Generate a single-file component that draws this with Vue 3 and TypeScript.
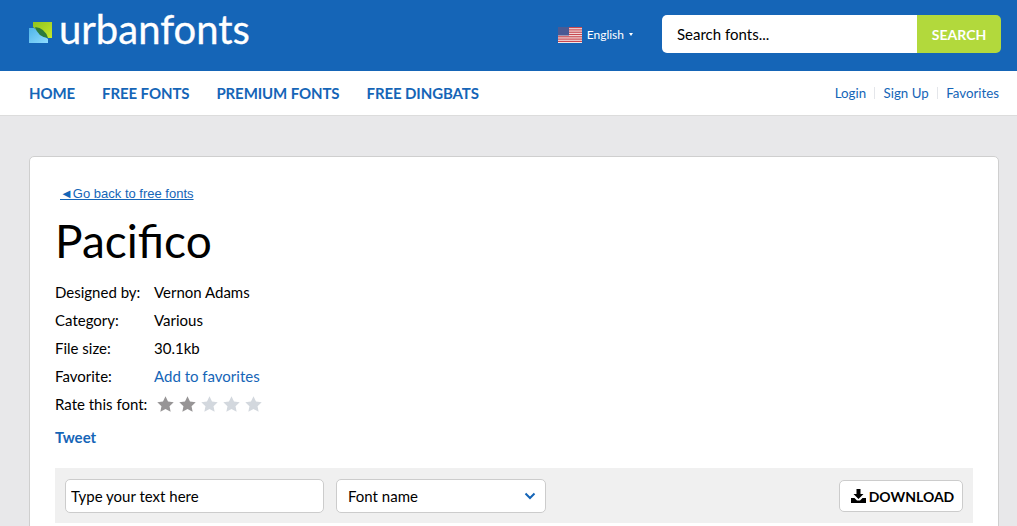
<script setup lang="ts">
const details: { label: string; value: string; link?: boolean }[] = [
  { label: 'Designed by:', value: 'Vernon Adams' },
  { label: 'Category:', value: 'Various' },
  { label: 'File size:', value: '30.1kb' },
  { label: 'Favorite:', value: 'Add to favorites', link: true },
]
const navItems = ['HOME', 'FREE FONTS', 'PREMIUM FONTS', 'FREE DINGBATS']
const userLinks = ['Login', 'Sign Up', 'Favorites']
const stars = [true, true, false, false, false]
const stripes = [0, 1, 2, 3, 4, 5, 6]
</script>

<template>
  <div class="page">
    <header class="top">
      <a class="logo">
        <svg class="logo-mark" width="23" height="21" viewBox="0 0 23 21">
          <defs>
            <linearGradient id="lg" x1="0" y1="0" x2="1" y2="1">
              <stop offset="0" stop-color="#8fc31f" />
              <stop offset="1" stop-color="#c5e82a" />
            </linearGradient>
            <linearGradient id="lb" x1="0" y1="0" x2="1" y2="1">
              <stop offset="0" stop-color="#4fb4e8" />
              <stop offset="1" stop-color="#8fdcff" />
            </linearGradient>
          </defs>
          <path d="M0 6 H5 L19 17 V21 H0 Z" fill="url(#lb)" />
          <path d="M4 0 H23 V16 H19 L4 5 Z" fill="url(#lg)" />
          <path d="M6 5 Q16 6 19 16 Q9 15 6 5 Z" fill="#2c7a3a" />
        </svg>
        <span class="logo-text">urbanfonts</span>
      </a>
      <div class="top-right">
        <div class="lang">
          <svg class="flag" width="24" height="16" viewBox="0 0 24 16">
            <rect width="24" height="16" fill="#f4e6e6" />
            <rect v-for="i in stripes" :key="i" x="0" :y="i * 2.3" width="24" height="1.2" fill="#c8474f" />
            <rect width="11" height="8.5" fill="#4a5a94" />
          </svg>
          <span>English</span>
          <i class="caret"></i>
        </div>
        <form class="search" @submit.prevent>
          <input class="search-input" type="text" placeholder="Search fonts..." />
          <button class="search-btn" type="submit">SEARCH</button>
        </form>
      </div>
    </header>

    <nav class="nav">
      <div class="nav-main">
        <a v-for="item in navItems" :key="item">{{ item }}</a>
      </div>
      <div class="nav-user">
        <template v-for="(l, i) in userLinks" :key="l">
          <span v-if="i > 0" class="sep"></span>
          <a>{{ l }}</a>
        </template>
      </div>
    </nav>

    <main class="main">
      <section class="card">
        <a class="back">◄Go back to free fonts</a>
        <h1 class="title">Pacifico</h1>
        <dl class="details">
          <div v-for="d in details" :key="d.label" class="row">
            <dt>{{ d.label }}</dt>
            <dd :class="{ link: d.link }">{{ d.value }}</dd>
          </div>
          <div class="row">
            <dt>Rate this font:</dt>
            <dd class="stars">
              <svg v-for="(on, i) in stars" :key="i" width="17" height="16" viewBox="0 0 24 23">
                <path
                  d="M12 0.5 L15.6 8 L23.8 9 L17.8 14.6 L19.4 22.8 L12 18.8 L4.6 22.8 L6.2 14.6 L0.2 9 L8.4 8 Z"
                  :fill="on ? '#979596' : '#d3d8de'"
                />
              </svg>
            </dd>
          </div>
        </dl>
        <a class="tweet">Tweet</a>
        <div class="toolbar">
          <input class="field text-field" type="text" placeholder="Type your text here" />
          <div class="field select-field">
            <span>Font name</span>
            <svg width="12" height="8" viewBox="0 0 12 8">
              <path d="M1.5 1.5 L6 6 L10.500 1.500" fill="none" stroke="#1565b7" stroke-width="2" />
            </svg>
          </div>
          <button class="download" type="button">
            <svg width="15" height="14" viewBox="0 0 15 14">
              <path d="M5.500 0 H9.500 V5 H12.500 L7.500 10 L2.500 5 H5.500 Z" fill="#000" />
              <path d="M0 9 H3.500 L6 11.500 H9 L11.500 9 H15 V14 H0 Z" fill="#000" />
            </svg>
            <span>DOWNLOAD</span>
          </button>
        </div>
      </section>
    </main>
  </div>
</template>

<style>
html,
body {
  margin: 0;
  height: 100%;
  overflow: hidden;
  background: #e8e8ea;
}
</style>

<style scoped>
.page {
  font-family: Lato, "Liberation Sans", sans-serif;
  height: 526px;
  overflow: hidden;
  color: #000;
}
a {
  cursor: pointer;
}
.top {
  height: 71px;
  background: #1565b7;
  display: flex;
  justify-content: space-between;
  align-items: flex-start;
  padding: 0 16px 0 29px;
}
.logo {
  display: flex;
  align-items: flex-start;
  gap: 7px;
}
.logo-mark {
  margin-top: 22px;
}
.logo-text {
  color: #fff;
  font-size: 40px;
  line-height: 40px;
  margin-top: 9px;
  -webkit-text-stroke: 0.3px #fff;
}
.top-right {
  display: flex;
  align-items: flex-start;
}
.lang {
  display: flex;
  align-items: center;
  color: #fff;
  font-size: 12px;
  height: 16px;
  margin-top: 26px;
  margin-right: 29px;
}
.flag {
  margin-top: 2px;
  margin-right: 5px;
}
.caret {
  width: 0;
  height: 0;
  margin-left: 5px;
  border-left: 2.500px solid transparent;
  border-right: 2.500px solid transparent;
  border-top: 3px solid #fff;
}
.search {
  display: flex;
  width: 339px;
  height: 38px;
  margin-top: 15px;
  border-radius: 5px;
  overflow: hidden;
}
.search-input {
  flex: 1;
  min-width: 0;
  border: 0;
  outline: 0;
  background: #fff;
  padding: 0 15px;
  font: 15px Lato, sans-serif;
}
.search-input::placeholder,
.field::placeholder {
  color: #000;
  opacity: 1;
}
.search-btn {
  width: 84px;
  border: 0;
  background: #b2d93c;
  color: #fff;
  font: 700 14px Lato, sans-serif;
  padding: 0;
}
.nav {
  height: 44px;
  background: #fff;
  border-bottom: 1px solid #dcdcdc;
  display: flex;
  justify-content: space-between;
  align-items: center;
  padding: 0 18px 0 29px;
}
.nav-main {
  display: flex;
  gap: 27px;
}
.nav-main a {
  color: #1565b7;
  font-size: 15px;
  font-weight: 700;
  letter-spacing: -0.1px;
}
.nav-user {
  display: flex;
  align-items: center;
  font-size: 13.300px;
  color: #1565b7;
}
.sep {
  width: 1px;
  height: 12px;
  background: #e4e6ea;
  margin: 0 8.500px 0 8px;
}
.main {
  padding: 40px 18px 0 29px;
}
.card {
  background: #fff;
  border: 1px solid #cfcfcf;
  border-radius: 5px;
  padding: 29px 25px 0;
  height: 500px;
  box-sizing: border-box;
}
.back {
  display: block;
  width: max-content;
  margin-left: 5px;
  color: #1565b7;
  font: 13px/16px "Liberation Sans", Arial, sans-serif;
  text-decoration: underline;
}
.title {
  font-size: 46px;
  font-weight: 400;
  line-height: 56px;
  margin: 11px 0 9px;
}
.details {
  margin: 0;
  font-size: 15px;
}
.row {
  display: flex;
  height: 28px;
  align-items: center;
}
dt {
  width: 99px;
}
dd {
  margin: 0;
}
.link {
  color: #1565b7;
}
.stars {
  display: flex;
  gap: 5px;
  margin-left: 3px;
}
.tweet {
  display: block;
  color: #1565b7;
  font-size: 15px;
  font-weight: 700;
  line-height: 18px;
  margin-top: 10px;
}
.toolbar {
  display: flex;
  align-items: center;
  gap: 12px;
  height: 55px;
  margin-top: 22px;
  padding: 0 10px;
  background: #f0f0f0;
}
.field {
  box-sizing: border-box;
  height: 34px;
  background: #fff;
  border: 1px solid #ccc;
  border-radius: 5px;
  font: 15px Lato, sans-serif;
  outline: 0;
}
.text-field {
  width: 259px;
  padding: 0 5px;
}
.select-field {
  width: 210px;
  display: flex;
  align-items: center;
  justify-content: space-between;
  padding: 0 9px 0 11px;
}
.download {
  margin-left: auto;
  box-sizing: border-box;
  width: 124px;
  height: 32px;
  display: flex;
  align-items: center;
  justify-content: center;
  gap: 3px;
  background: #fff;
  border: 1px solid #ccc;
  border-radius: 5px;
  font: 700 14px Lato, sans-serif;
  color: #000;
  padding: 1px 0 0 3px;
}
</style>
